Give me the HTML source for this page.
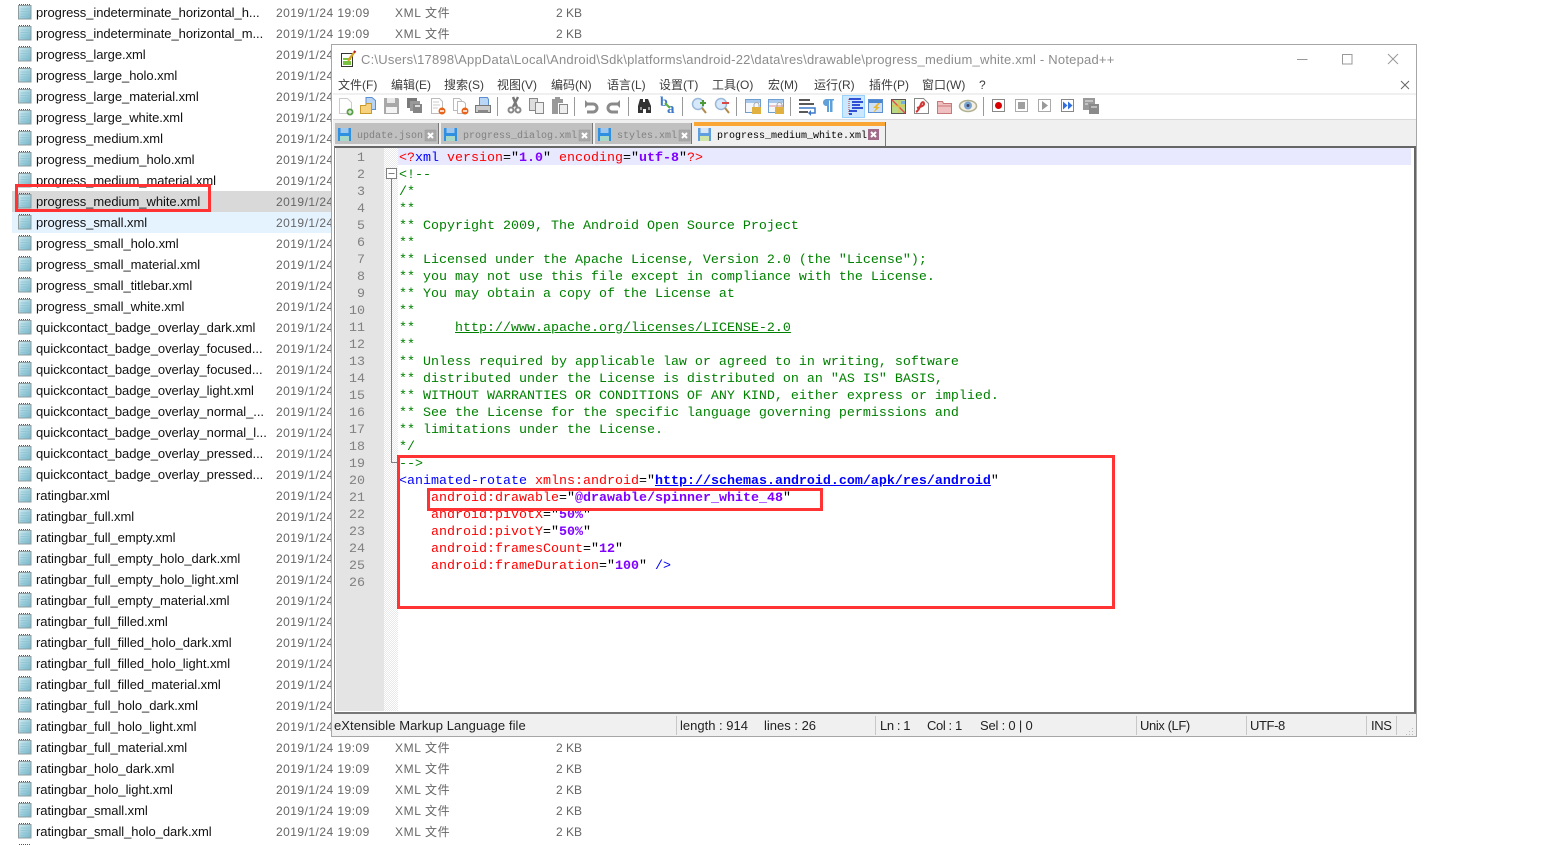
<!DOCTYPE html>
<html lang="zh"><head><meta charset="utf-8"><title>Notepad++</title>
<style>
html,body{margin:0;padding:0;background:#fff}
#p{position:relative;width:1566px;height:845px;overflow:hidden;background:#fff;font-family:"Liberation Sans","Noto Sans CJK SC",sans-serif}
.a{position:absolute;white-space:nowrap}
#l{position:absolute;left:12px;top:2px;width:330px}
.r{position:relative;height:21px;line-height:21px;font-size:13px;white-space:nowrap}
.r.s{background:#d9d9d9}.r.h{background:#e5f3ff}
.r svg{position:absolute;left:5px;top:2px;width:16px;height:16px}
.r b{position:absolute;left:24px;top:0;font-weight:normal;color:#111;letter-spacing:-.05px}
.r u{position:absolute;left:264px;top:1px;text-decoration:none;color:#666;font-size:12px;letter-spacing:.47px}
.r s{position:absolute;left:383px;top:1px;text-decoration:none;color:#666;font-size:12px;letter-spacing:.6px}
.r em{position:absolute;left:544px;top:1px;font-style:normal;color:#666;font-size:12px}
#w{position:absolute;left:331px;top:44px;width:1084px;height:691px;border:1px solid #a6a6a6;background:#fff}
.m{position:absolute;top:76px;font-size:12px;line-height:18px;color:#3c3c3c;white-space:nowrap}
.tab{position:absolute;top:123px;height:21px;background:#c0c0c0;border-right:1px solid #777}
.tt{position:absolute;top:130px;font:10px/14px "Liberation Mono",monospace;color:#808080;white-space:pre}
#c{position:absolute;left:399px;top:150px;font:13.33px/17px "Liberation Mono",monospace;color:#008000;white-space:pre}
#n{position:absolute;left:336px;top:150px;width:29px;text-align:right;font:13.33px/17px "Liberation Mono",monospace;color:#808080;white-space:pre}
.c{color:#008000}.t{color:#00f}.k{color:#f00}.v{color:#8000ff;font-weight:bold}.o{color:#000}.e{color:#000}
.st{position:absolute;top:717px;font-size:13px;line-height:18px;color:#222;white-space:nowrap}
.st.n{letter-spacing:-.4px}
.dv{position:absolute;top:716px;width:1px;height:19px;background:#c8c8c8}
.red{position:absolute;border:3px solid #ff3333;box-sizing:border-box}
</style></head><body><div id="p">
<svg width="0" height="0" style="position:absolute"><defs>
<linearGradient id="fg" x1="0" y1="0" x2="1" y2="1"><stop offset="0" stop-color="#d4ecf2"/><stop offset="1" stop-color="#6fb4c8"/></linearGradient>
<symbol id="f" viewBox="0 0 16 16"><rect x="1.500" y="1.500" width="12.500" height="13.500" fill="url(#fg)" stroke="#8f9ca0"/><path d="M2 .5h12" stroke="#555" stroke-dasharray="1 1"/><path d="M3.500 5h9M3.500 7.500h9M3.500 10h9M3.500 12.500h9" stroke="#8cc2d2" stroke-width=".7"/></symbol>
</defs></svg>
<div id="l">
<div class="r"><svg><use href="#f"/></svg><b>progress_indeterminate_horizontal_h...</b><u>2019/1/24 19:09</u><s>XML 文件</s><em>2 KB</em></div>
<div class="r"><svg><use href="#f"/></svg><b>progress_indeterminate_horizontal_m...</b><u>2019/1/24 19:09</u><s>XML 文件</s><em>2 KB</em></div>
<div class="r"><svg><use href="#f"/></svg><b>progress_large.xml</b><u>2019/1/24 19:09</u></div>
<div class="r"><svg><use href="#f"/></svg><b>progress_large_holo.xml</b><u>2019/1/24 19:09</u></div>
<div class="r"><svg><use href="#f"/></svg><b>progress_large_material.xml</b><u>2019/1/24 19:09</u></div>
<div class="r"><svg><use href="#f"/></svg><b>progress_large_white.xml</b><u>2019/1/24 19:09</u></div>
<div class="r"><svg><use href="#f"/></svg><b>progress_medium.xml</b><u>2019/1/24 19:09</u></div>
<div class="r"><svg><use href="#f"/></svg><b>progress_medium_holo.xml</b><u>2019/1/24 19:09</u></div>
<div class="r"><svg><use href="#f"/></svg><b>progress_medium_material.xml</b><u>2019/1/24 19:09</u></div>
<div class="r s"><svg><use href="#f"/></svg><b>progress_medium_white.xml</b><u>2019/1/24 19:09</u></div>
<div class="r h"><svg><use href="#f"/></svg><b>progress_small.xml</b><u>2019/1/24 19:09</u></div>
<div class="r"><svg><use href="#f"/></svg><b>progress_small_holo.xml</b><u>2019/1/24 19:09</u></div>
<div class="r"><svg><use href="#f"/></svg><b>progress_small_material.xml</b><u>2019/1/24 19:09</u></div>
<div class="r"><svg><use href="#f"/></svg><b>progress_small_titlebar.xml</b><u>2019/1/24 19:09</u></div>
<div class="r"><svg><use href="#f"/></svg><b>progress_small_white.xml</b><u>2019/1/24 19:09</u></div>
<div class="r"><svg><use href="#f"/></svg><b>quickcontact_badge_overlay_dark.xml</b><u>2019/1/24 19:09</u></div>
<div class="r"><svg><use href="#f"/></svg><b>quickcontact_badge_overlay_focused...</b><u>2019/1/24 19:09</u></div>
<div class="r"><svg><use href="#f"/></svg><b>quickcontact_badge_overlay_focused...</b><u>2019/1/24 19:09</u></div>
<div class="r"><svg><use href="#f"/></svg><b>quickcontact_badge_overlay_light.xml</b><u>2019/1/24 19:09</u></div>
<div class="r"><svg><use href="#f"/></svg><b>quickcontact_badge_overlay_normal_...</b><u>2019/1/24 19:09</u></div>
<div class="r"><svg><use href="#f"/></svg><b>quickcontact_badge_overlay_normal_l...</b><u>2019/1/24 19:09</u></div>
<div class="r"><svg><use href="#f"/></svg><b>quickcontact_badge_overlay_pressed...</b><u>2019/1/24 19:09</u></div>
<div class="r"><svg><use href="#f"/></svg><b>quickcontact_badge_overlay_pressed...</b><u>2019/1/24 19:09</u></div>
<div class="r"><svg><use href="#f"/></svg><b>ratingbar.xml</b><u>2019/1/24 19:09</u></div>
<div class="r"><svg><use href="#f"/></svg><b>ratingbar_full.xml</b><u>2019/1/24 19:09</u></div>
<div class="r"><svg><use href="#f"/></svg><b>ratingbar_full_empty.xml</b><u>2019/1/24 19:09</u></div>
<div class="r"><svg><use href="#f"/></svg><b>ratingbar_full_empty_holo_dark.xml</b><u>2019/1/24 19:09</u></div>
<div class="r"><svg><use href="#f"/></svg><b>ratingbar_full_empty_holo_light.xml</b><u>2019/1/24 19:09</u></div>
<div class="r"><svg><use href="#f"/></svg><b>ratingbar_full_empty_material.xml</b><u>2019/1/24 19:09</u></div>
<div class="r"><svg><use href="#f"/></svg><b>ratingbar_full_filled.xml</b><u>2019/1/24 19:09</u></div>
<div class="r"><svg><use href="#f"/></svg><b>ratingbar_full_filled_holo_dark.xml</b><u>2019/1/24 19:09</u></div>
<div class="r"><svg><use href="#f"/></svg><b>ratingbar_full_filled_holo_light.xml</b><u>2019/1/24 19:09</u></div>
<div class="r"><svg><use href="#f"/></svg><b>ratingbar_full_filled_material.xml</b><u>2019/1/24 19:09</u></div>
<div class="r"><svg><use href="#f"/></svg><b>ratingbar_full_holo_dark.xml</b><u>2019/1/24 19:09</u></div>
<div class="r"><svg><use href="#f"/></svg><b>ratingbar_full_holo_light.xml</b><u>2019/1/24 19:09</u></div>
<div class="r"><svg><use href="#f"/></svg><b>ratingbar_full_material.xml</b><u>2019/1/24 19:09</u><s>XML 文件</s><em>2 KB</em></div>
<div class="r"><svg><use href="#f"/></svg><b>ratingbar_holo_dark.xml</b><u>2019/1/24 19:09</u><s>XML 文件</s><em>2 KB</em></div>
<div class="r"><svg><use href="#f"/></svg><b>ratingbar_holo_light.xml</b><u>2019/1/24 19:09</u><s>XML 文件</s><em>2 KB</em></div>
<div class="r"><svg><use href="#f"/></svg><b>ratingbar_small.xml</b><u>2019/1/24 19:09</u><s>XML 文件</s><em>2 KB</em></div>
<div class="r"><svg><use href="#f"/></svg><b>ratingbar_small_holo_dark.xml</b><u>2019/1/24 19:09</u><s>XML 文件</s><em>2 KB</em></div>
<div class="r"><svg><use href="#f"/></svg></div>
</div>
<div class="red" style="left:15px;top:184px;width:196px;height:28px"></div>

<div id="w"></div>
<div class="a" style="left:333px;top:93px;width:1083px;height:2px;background:#f0f0f0"></div>
<div class="a" style="left:333px;top:119px;width:1083px;height:27px;background:#f0f0f0;border-top:1px solid #d9d9d9;box-sizing:border-box"></div>

<div class="a" style="left:361px;top:51px;font-size:13px;line-height:17px;color:#8c8c8c;letter-spacing:.215px">C:\Users\17898\AppData\Local\Android\Sdk\platforms\android-22\data\res\drawable\progress_medium_white.xml - Notepad++</div>

<div class="m" style="left:338px">文件(F)</div><div class="m" style="left:391px">编辑(E)</div><div class="m" style="left:444px">搜索(S)</div><div class="m" style="left:497px">视图(V)</div><div class="m" style="left:551px">编码(N)</div><div class="m" style="left:607px">语言(L)</div><div class="m" style="left:659px">设置(T)</div><div class="m" style="left:712px">工具(O)</div><div class="m" style="left:768px">宏(M)</div><div class="m" style="left:814px">运行(R)</div><div class="m" style="left:869px">插件(P)</div><div class="m" style="left:922px">窗口(W)</div><div class="m" style="left:979px">?</div>

<!-- tabs -->
<div class="tab" style="left:335px;width:103px"></div>
<div class="tab" style="left:441px;width:151px"></div>
<div class="tab" style="left:595px;width:96px"></div>
<div class="a" style="left:694px;top:122px;width:191px;height:24px;background:#f0f0f0;border-right:1px solid #777;box-sizing:content-box"></div>
<div class="a" style="left:694px;top:122px;width:191px;height:4px;background:#faa634"></div>
<div class="tt" style="left:357px">update.json</div>
<div class="tt" style="left:463px">progress_dialog.xml</div>
<div class="tt" style="left:617px">styles.xml</div>
<div class="tt" style="left:717px;color:#000">progress_medium_white.xml</div>

<!-- editor -->
<div class="a" style="left:334px;top:146px;width:1082px;height:568px;box-sizing:border-box;border-top:2px solid #666;border-left:1px solid #888;border-right:2px solid #666;border-bottom:2px solid #777;background:#fff"></div>
<div class="a" style="left:336px;top:148px;width:48px;height:563px;background:#e4e4e4"></div>
<div class="a" style="left:384px;top:148px;width:14px;height:563px;background:repeating-conic-gradient(#e8e8e8 0 25%,#fff 0 50%) 0 0/2px 2px"></div>
<div class="a" style="left:398px;top:148px;width:1013px;height:17px;background:#e8e8ff"></div>

<div id="n">1
2
3
4
5
6
7
8
9
10
11
12
13
14
15
16
17
18
19
20
21
22
23
24
25
26</div>
<div id="c"><span class="k">&lt;?</span><span class="t">xml</span> <span class="k">version</span><span class="o">=</span><span class="o">"</span><span class="v">1.0</span><span class="o">"</span> <span class="k">encoding</span><span class="o">=</span><span class="o">"</span><span class="v">utf-8</span><span class="o">"</span><span class="k">?&gt;</span>
&lt;!--
/*
**
** Copyright 2009, The Android Open Source Project
**
** Licensed under the Apache License, Version 2.0 (the "License");
** you may not use this file except in compliance with the License.
** You may obtain a copy of the License at
**
**     <span style="text-decoration:underline">http://www.apache.org/licenses/LICENSE-2.0</span>
**
** Unless required by applicable law or agreed to in writing, software
** distributed under the License is distributed on an "AS IS" BASIS,
** WITHOUT WARRANTIES OR CONDITIONS OF ANY KIND, either express or implied.
** See the License for the specific language governing permissions and
** limitations under the License.
*/
--&gt;
<span class="t">&lt;animated-rotate</span> <span class="k">xmlns:android</span><span class="o">="</span><span style="color:#00f;font-weight:bold;text-decoration:underline">http://schemas.android.com/apk/res/android</span><span class="o">"</span>
    <span class="k">android:drawable</span><span class="o">="</span><span class="v">@drawable/spinner_white_48</span><span class="o">"</span>
    <span class="k">android:pivotX</span><span class="o">="</span><span class="v">50%</span><span class="o">"</span>
    <span class="k">android:pivotY</span><span class="o">="</span><span class="v">50%</span><span class="o">"</span>
    <span class="k">android:framesCount</span><span class="o">="</span><span class="v">12</span><span class="o">"</span>
    <span class="k">android:frameDuration</span><span class="o">="</span><span class="v">100</span><span class="o">"</span> <span class="t">/&gt;</span></div>

<!-- status -->
<div class="a" style="left:332px;top:714px;width:1084px;height:22px;background:#f0f0f0"></div>
<div class="dv" style="left:676px"></div><div class="dv" style="left:875px"></div><div class="dv" style="left:1136px"></div><div class="dv" style="left:1246px"></div><div class="dv" style="left:1366px"></div><div class="dv" style="left:1396px"></div>
<div class="st" style="left:334px;letter-spacing:.08px">eXtensible Markup Language file</div>
<div class="st" style="left:680px">length : 914</div><div class="st" style="left:764px">lines : 26</div>
<div class="st n" style="left:880px">Ln : 1</div><div class="st n" style="left:927px">Col : 1</div><div class="st n" style="left:980px;letter-spacing:-.2px">Sel : 0 | 0</div>
<div class="st n" style="left:1140px">Unix (LF)</div><div class="st n" style="left:1250px">UTF-8</div><div class="st n" style="left:1371px">INS</div>

<!-- all icons in page coordinates -->
<svg class="a" style="left:0;top:0" width="1566" height="845" viewBox="0 0 1566 845">
<defs>
<g id="sv"><rect x="0" y="0" width="13" height="13" fill="#2f8fe0"/><rect x="2.500" y="0" width="8" height="5" fill="#9fc6ec"/><rect x="2" y="8" width="9" height="5" fill="#a8d8c8"/></g>
<g id="xb"><rect width="11" height="11" fill="#a8a8a8" stroke="#999" stroke-width=".5"/><path d="M3 3l5 5M8 3l-5 5" stroke="#fff" stroke-width="2"/></g>
</defs>
<!-- fold marker -->
<rect x="386.500" y="168.500" width="10" height="10" fill="#fff" stroke="#808080"/><path d="M388.500 173.500h6" stroke="#808080"/><path d="M391.500 179v283.500H399" fill="none" stroke="#808080"/>
<!-- title icon -->
<rect x="341.500" y="53.500" width="11" height="13" fill="#fff" stroke="#333"/><path d="M343 59h8M343 62h8M343 64h8" stroke="#79c141" stroke-width="2"/><path d="M347 60l7-9 1.500 1.500-6.500 9z" fill="#d8a020"/><path d="M354 51l1.500 1.500" stroke="#b01818" stroke-width="2"/>
<!-- window controls -->
<path d="M1297 59.500h10.500" stroke="#999"/><rect x="1342.500" y="54.500" width="9.500" height="9.500" fill="none" stroke="#999"/><path d="M1388 54l10 10M1398 54l-10 10" stroke="#999"/><path d="M1401 81l8 8M1409 81l-8 8" stroke="#666"/>
<!-- resize grip -->
<g fill="#bbb"><rect x="1412" y="728" width="1" height="1"/><rect x="1409" y="731" width="1" height="1"/><rect x="1412" y="731" width="1" height="1"/><rect x="1406" y="734" width="1" height="1"/><rect x="1409" y="734" width="1" height="1"/><rect x="1412" y="734" width="1" height="1"/></g>
<!-- tab icons -->
<use href="#sv" x="338" y="128"/><use href="#sv" x="444" y="128"/><use href="#sv" x="598" y="128"/>
<g transform="translate(698 128)"><rect width="13" height="13" fill="#5f9fe0"/><rect x="2.500" width="8" height="5" fill="#d8e6f5"/><rect x="2" y="8" width="9" height="5" fill="#cfe6a8"/></g>
<use href="#xb" x="425" y="130"/><use href="#xb" x="579" y="130"/><use href="#xb" x="679" y="130"/>
<g transform="translate(868 129)"><rect width="11" height="11" fill="#a06a88"/><path d="M3 3l5 5M8 3l-5 5" stroke="#fff" stroke-width="2"/></g>
<!-- toolbar: file group -->
<path d="M339.500 98.500h8l4 4v11h-12z" fill="#fff" stroke="#ccc"/><circle cx="350" cy="112" r="3.500" fill="#5aa04a"/><path d="M348 112h4M350 110v4" stroke="#fff"/>
<path d="M366 97.500h6l3.500 3v9h-9.500z" fill="#b9d3f3" stroke="#5c8fd0"/><path d="M360.500 105.500h5l1-2h5v10h-11z" fill="#f6d27e" stroke="#c89a2c"/>
<path d="M384 98h14l1 1v15h-15z" fill="#a8a8a8"/><rect x="387" y="98" width="8" height="5" fill="#e8e8e8"/><rect x="386" y="107" width="11" height="6" fill="#f4f4f4"/>
<rect x="407" y="98" width="10" height="10" fill="#7a7a7a"/><rect x="410" y="101" width="10" height="10" fill="#999"/><rect x="413" y="104" width="9" height="9" fill="#858585"/><rect x="415" y="105" width="5" height="2" fill="#ddd"/>
<path d="M431.500 98.500h8l3 3v12h-11z" fill="#fff" stroke="#bbb"/><path d="M433 102h6M433 105h7M433 108h5" stroke="#ccc"/><circle cx="442" cy="111" r="3.500" fill="#e8641c"/><path d="M440 111h4" stroke="#fff" stroke-width="1.500"/>
<path d="M453.500 98.500h6l2 2v10h-8z" fill="#fff" stroke="#bbb"/><path d="M457.500 101.500h6l2 2v10h-8z" fill="#fff" stroke="#bbb"/><circle cx="465" cy="111" r="3.500" fill="#e8641c"/><path d="M463 111h4" stroke="#fff" stroke-width="1.500"/>
<path d="M479.500 97.500h8l1 2v6h-9z" fill="#b9d6f5" stroke="#5c8fd0"/><path d="M475.500 105.500h15v7h-15z" fill="#ccc" stroke="#777"/><rect x="478" y="110" width="10" height="3" fill="#888"/>
<rect x="497" y="97" width="1" height="19" fill="#999"/>
<!-- cut copy paste -->
<path d="M518 97l-5 10M513 97l4 10" stroke="#777" stroke-width="2.500"/><circle cx="511" cy="110" r="2.500" fill="none" stroke="#888" stroke-width="2"/><circle cx="518" cy="110" r="2.500" fill="none" stroke="#888" stroke-width="2"/>
<path d="M529.500 98.500h8v12h-8z" fill="#ddd" stroke="#888"/><path d="M535.500 102.500h8v11h-8z" fill="#eee" stroke="#888"/>
<path d="M552 99h11v4h-5v11h-6z" fill="#999"/><path d="M559.500 104.500h8v9h-8z" fill="#eee" stroke="#888"/><rect x="555" y="97" width="5" height="3" fill="#999"/>
<rect x="574" y="97" width="1" height="19" fill="#999"/>
<!-- undo redo -->
<path d="M586 104h7a4 4 0 0 1 0 8h-6" fill="none" stroke="#8a8a8a" stroke-width="3"/><path d="M585 100v8l4-4z" fill="#8a8a8a"/>
<path d="M619 104h-7a4 4 0 0 0 0 8h6" fill="none" stroke="#8a8a8a" stroke-width="3"/><path d="M620 100v8l-4-4z" fill="#8a8a8a"/>
<rect x="628" y="97" width="1" height="19" fill="#999"/>
<!-- find replace -->
<path d="M638 106l2-7h3v3h2v-3h3l3 7v7h-5v-4h-3v4h-5z" fill="#333"/><rect x="640" y="107" width="2" height="3" fill="#999"/><rect x="648" y="107" width="2" height="3" fill="#999"/>
<text x="660" y="106" font-family="Liberation Serif,serif" font-size="14" font-weight="bold" fill="#3c78c8">b</text><text x="667" y="113" font-family="Liberation Serif,serif" font-size="15" font-weight="bold" fill="#3c78c8">a</text><path d="M665 103l5 5" stroke="#5ab03c" stroke-width="2"/>
<rect x="682" y="97" width="1" height="19" fill="#999"/>
<!-- zoom -->
<circle cx="698" cy="104" r="5.500" fill="#d6e8fa" stroke="#9ab8d8" stroke-width="1.500"/><path d="M702 108l4 5" stroke="#b08a4a" stroke-width="2"/><path d="M700 103h6M703 100v6" stroke="#4a9a3a" stroke-width="2"/>
<circle cx="721" cy="104" r="5.500" fill="#d6e8fa" stroke="#9ab8d8" stroke-width="1.500"/><path d="M725 108l4 5" stroke="#b08a4a" stroke-width="2"/><path d="M722 103h7" stroke="#d84848" stroke-width="2"/>
<rect x="736" y="97" width="1" height="19" fill="#999"/>
<!-- sync -->
<rect x="745.500" y="99.500" width="15" height="13" fill="#f4f8fd" stroke="#6f9fd0"/><rect x="746" y="100" width="14" height="3" fill="#a8c8ec"/><rect x="752" y="107" width="9" height="7" fill="#e0b040"/><path d="M754 107v-2a2.500 2.500 0 0 1 5 0v2" fill="none" stroke="#a8a8a8"/>
<rect x="768.500" y="99.500" width="15" height="13" fill="#f4f8fd" stroke="#6f9fd0"/><rect x="769" y="100" width="14" height="3" fill="#a8c8ec"/><path d="M769 106h14" stroke="#e09090"/><rect x="775" y="107" width="9" height="7" fill="#e0b040"/><path d="M777 107v-2a2.500 2.500 0 0 1 5 0v2" fill="none" stroke="#a8a8a8"/>
<rect x="790" y="97" width="1" height="19" fill="#999"/>
<!-- wrap, para -->
<path d="M799 100h11M799 104h15M799 112h9" stroke="#222" stroke-width="1.500"/><path d="M799 108h16v5h-5" fill="none" stroke="#3c78c8" stroke-width="1.500"/><path d="M811 110v6l-3-3z" fill="#3c78c8"/>
<path d="M826 99h8v1.500h-1.500V112h-2.500V100.500h-1V112h-2v-6a3.500 3.500 0 0 1-1-7z" fill="#5fa0d8"/>
<!-- indent guide selected -->
<rect x="842.500" y="95.500" width="22" height="22" fill="#cce8ff" stroke="#99d1ff"/>
<path d="M849 99v15" stroke="#b04040" stroke-dasharray="1 1"/><path d="M849 99h12M852 102h11M852 105h8M852 108h11M849 111h8M849 114h3" stroke="#1a3ad0" stroke-width="1.800"/>
<!-- lang, map, func, folder, eye -->
<rect x="868.500" y="99.500" width="14" height="13" fill="#cfe0f5" stroke="#5c8fd0"/><rect x="869" y="100" width="13" height="3" fill="#4a86cf"/><path d="M878 103l-5 5h3l-3 5 7-6h-3l3-4z" fill="#e8b830"/>
<rect x="891.500" y="99.500" width="14" height="14" fill="#b8d888" stroke="#555"/><path d="M892 100l13 13" stroke="#e85050" stroke-width="1.500"/><path d="M899 100v13M892 106h13" stroke="#e8c040"/><rect x="901" y="101" width="4" height="3" fill="#7ab0e0"/>
<path d="M914.500 98.500h9l5 5v10h-14z" fill="#fff" stroke="#888"/><path d="M916 112c2-1 4-5 5-8 1-2 3-3 3 0 0 2-4 3-7 4" fill="none" stroke="#d03838" stroke-width="2"/>
<path d="M937.500 101.500h5l1 2h8v10h-14z" fill="#f0c0c0" stroke="#c87878"/><path d="M938 106h13" stroke="#c87878"/>
<ellipse cx="968" cy="106" rx="8.500" ry="5.500" fill="#f4f0e4" stroke="#b0b090" stroke-width="1.500"/><circle cx="968" cy="105.500" r="4" fill="#7aa4d0"/><circle cx="968" cy="105.500" r="1.500" fill="#446"/>
<rect x="983" y="97" width="1" height="19" fill="#999"/>
<!-- macros -->
<rect x="992.500" y="99.500" width="12" height="12" fill="#fff" stroke="#888"/><circle cx="998.500" cy="105.500" r="3.500" fill="#d80000"/>
<rect x="1015.500" y="99.500" width="12" height="12" fill="#fff" stroke="#aaa"/><rect x="1018" y="102" width="7" height="7" fill="#a0a0a0"/>
<rect x="1038.500" y="99.500" width="12" height="12" fill="#fff" stroke="#aaa"/><path d="M1042 101v9l6-4.500z" fill="#999"/>
<rect x="1061.500" y="99.500" width="12" height="12" fill="#fff" stroke="#888"/><path d="M1063 101.500v8l4.500-4zM1068 101.500v8l4.500-4z" fill="#2f6fe0"/>
<rect x="1083" y="98" width="12" height="12" fill="#9a9a9a"/><rect x="1089" y="104" width="10" height="10" fill="#8a8a8a"/><path d="M1085 101h8M1085 104h3M1091 107h6" stroke="#eee"/>
</svg>

<div class="red" style="left:397px;top:455px;width:718px;height:154px"></div>
<div class="red" style="left:427px;top:488px;width:396px;height:23px"></div>
</div></body></html>
